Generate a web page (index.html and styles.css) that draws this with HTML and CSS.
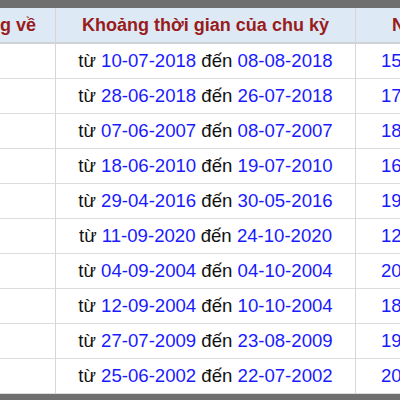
FILE: index.html
```html
<!DOCTYPE html>
<html lang="vi">
<head>
<meta charset="utf-8">
<link rel="stylesheet" href="styles.css">
</head>
<body>
<div class="frame">
<table class="cycles">
<colgroup><col class="c1"><col class="c2"><col class="c3"></colgroup>
<thead>
<tr><th>Cặp số không về</th><th>Khoảng thời gian của chu kỳ</th><th>Ngày</th></tr>
</thead>
<tbody>
<tr><td>00</td><td>từ <span class="d">10-07-2018</span> đến <span class="d">08-08-2018</span></td><td class="n">15 ngày</td></tr>
<tr><td>01</td><td>từ <span class="d">28-06-2018</span> đến <span class="d">26-07-2018</span></td><td class="n">17 ngày</td></tr>
<tr><td>02</td><td>từ <span class="d">07-06-2007</span> đến <span class="d">08-07-2007</span></td><td class="n">18 ngày</td></tr>
<tr><td>03</td><td>từ <span class="d">18-06-2010</span> đến <span class="d">19-07-2010</span></td><td class="n">16 ngày</td></tr>
<tr><td>04</td><td>từ <span class="d">29-04-2016</span> đến <span class="d">30-05-2016</span></td><td class="n">19 ngày</td></tr>
<tr><td>05</td><td>từ <span class="d">11-09-2020</span> đến <span class="d">24-10-2020</span></td><td class="n">12 ngày</td></tr>
<tr><td>06</td><td>từ <span class="d">04-09-2004</span> đến <span class="d">04-10-2004</span></td><td class="n">20 ngày</td></tr>
<tr><td>07</td><td>từ <span class="d">12-09-2004</span> đến <span class="d">10-10-2004</span></td><td class="n">18 ngày</td></tr>
<tr><td>08</td><td>từ <span class="d">27-07-2009</span> đến <span class="d">23-08-2009</span></td><td class="n">19 ngày</td></tr>
<tr><td>09</td><td>từ <span class="d">25-06-2002</span> đến <span class="d">22-07-2002</span></td><td class="n">20 ngày</td></tr>
</tbody>
</table>
</div>
</body>
</html>
```
FILE: styles.css
```css
html, body {
  margin: 0;
  padding: 0;
}
body {
  font-family: "Liberation Sans", Arial, Helvetica, sans-serif;
  font-size: 18px;
  color: #111;
  background: #fff;
}
.frame {
  width: 400px;
  height: 400px;
  box-sizing: border-box;
  padding-top: 8px;
  background: #6f6f6f;
  overflow: hidden;
}
.cycles {
  table-layout: fixed;
  border-collapse: separate;
  border-spacing: 0;
  margin-left: -127px;
  width: 600px;
  background: #fff;
}
.c1 { width: 183px; }
.c2 { width: 300px; }
.c3 { width: 117px; }
.cycles th,
.cycles td {
  padding: 0;
  text-align: center;
  white-space: nowrap;
  border-right: 1px solid #d6d6d6;
  border-bottom: 1px solid #dcdcdc;
  height: 34px;
}
.cycles td {
  font-size: 18.6px;
}
.cycles th {
  background: #dde9f5;
  color: #981c1c;
  font-weight: bold;
  height: 34px;
  border-bottom: 2px solid #cfd3d8;
}
.d, .n {
  color: #1a1aff;
}
```
